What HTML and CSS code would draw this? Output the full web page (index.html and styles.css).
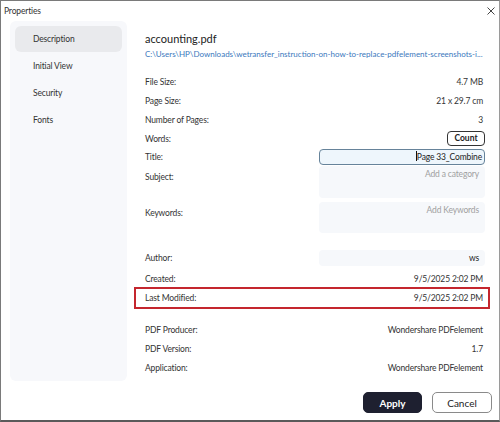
FILE: index.html
```html
<!DOCTYPE html>
<html>
<head>
<meta charset="utf-8">
<link rel="stylesheet" href="styles.css">
</head>
<body>
<div class="window">
  <div class="titlebar">
    <span class="title">Properties</span>
    <svg class="close" width="8" height="8" viewBox="0 0 8 8"><path d="M0.5 0.5L7.5 7.5M7.5 0.5L0.5 7.5" stroke="#444" stroke-width="1"/></svg>
  </div>
  <div class="content">
    <nav class="sidebar">
      <div class="nav-item active">Description</div>
      <div class="nav-item">Initial View</div>
      <div class="nav-item">Security</div>
      <div class="nav-item">Fonts</div>
    </nav>
    <main class="main">
      <div class="filename">accounting.pdf</div>
      <div class="path">C:\Users\HP\Downloads\wetransfer_instruction-on-how-to-replace-pdfelement-screenshots-i...</div>
      <div class="group first">
        <div class="row"><span class="label">File Size:</span><span class="value">4.7 MB</span></div>
        <div class="row"><span class="label">Page Size:</span><span class="value">21 x 29.7 cm</span></div>
        <div class="row"><span class="label">Number of Pages:</span><span class="value">3</span></div>
        <div class="row"><span class="label">Words:</span><button class="count">Count</button></div>
        <div class="row title-row"><span class="label">Title:</span><div class="input focused"><span class="caret"></span>Page 33_Combine</div></div>
        <div class="row area-row subject"><span class="label">Subject:</span><div class="area">Add a category</div></div>
        <div class="row area-row keywords"><span class="label">Keywords:</span><div class="area">Add Keywords</div></div>
        <div class="row author-row"><span class="label">Author:</span><div class="input plain">ws</div></div>
        <div class="row"><span class="label">Created:</span><span class="value">9/5/2025 2:02 PM</span></div>
        <div class="row highlight"><span class="label">Last Modified:</span><span class="value">9/5/2025 2:02 PM</span></div>
      </div>
      <div class="group second">
        <div class="row"><span class="label">PDF Producer:</span><span class="value">Wondershare PDFelement</span></div>
        <div class="row"><span class="label">PDF Version:</span><span class="value">1.7</span></div>
        <div class="row"><span class="label">Application:</span><span class="value">Wondershare PDFelement</span></div>
      </div>
    </main>
  </div>
  <div class="footer">
    <button class="btn apply">Apply</button>
    <button class="btn cancel">Cancel</button>
  </div>
</div>
</body>
</html>
```

FILE: styles.css
```css
* { box-sizing: border-box; }
html, body { margin: 0; padding: 0; background: #fff; }
body {
  font-family: Lato, "Noto Sans", sans-serif;
  font-size: 8.5px;
  letter-spacing: -0.15px;
  color: #333;
}
.window {
  width: 500px;
  height: 422px;
  border: 1px solid #7a7a7a;
  border-bottom: 2px solid #5a5a5a;
  border-right-color: #9a9a9a;
  background: #fff;
  display: flex;
  flex-direction: column;
}
.titlebar {
  height: 19px;
  display: flex;
  align-items: center;
  justify-content: space-between;
  padding: 0 4px 0 3px;
}
.title { font-size: 8.5px; color: #333; }
.close { display: block; margin-top: 1px; }
.content {
  display: flex;
  height: 360px;
  margin-top: 1px;
}
.sidebar {
  flex: 0 0 117px;
  width: 117px;
  margin-left: 9px;
  background: #f7f8fb;
  border-radius: 6px;
  padding: 5px;
  display: flex;
  flex-direction: column;
  gap: 1px;
}
.nav-item {
  height: 26px;
  line-height: 26px;
  padding-left: 18px;
  border-radius: 6px;
  font-size: 8.5px;
  color: #333;
}
.nav-item.active { background: #e9eaed; }
.main {
  flex: 1;
  min-width: 0;
  margin-left: 18px;
  margin-right: 14px;
  padding-top: 10px;
}
.filename {
  font-size: 11px;
  letter-spacing: 0;
  line-height: 16px;
  color: #222;
}
.path {
  font-size: 8px;
  letter-spacing: 0;
  line-height: 12px;
  color: #3a78bd;
  white-space: nowrap;
  overflow: hidden;
  margin-top: 1px;
}
.group.first { margin-top: 12px; }
.group.second { margin-top: 13px; }
.row {
  display: flex;
  justify-content: space-between;
  align-items: center;
  height: 19px;
  position: relative;
}
.label { color: #333; }
.value { color: #333; padding-right: 2px; }
.count {
  font-family: inherit;
  font-size: 8.5px;
  font-weight: 700;
  color: #222;
  background: #fff;
  border: 1px solid #333;
  border-radius: 4px;
  width: 38px;
  height: 15px;
  padding: 0;
  line-height: 13px;
}
.input {
  width: 166px;
  height: 16px;
  border-radius: 4px;
  text-align: right;
  line-height: 14px;
  padding: 0 2px;
  color: #222;
}
.input.focused {
  border: 1px solid #66839a;
  background: #eef6fc;
  white-space: nowrap;
}
.caret {
  display: inline-block;
  width: 1px;
  height: 10px;
  background: #111;
  vertical-align: -1px;
}
.title-row { height: 18px; }
.area-row { align-items: flex-start; }
.area-row .label { margin-top: 6px; }
.area {
  width: 166px;
  background: #f6f8fb;
  border-radius: 4px;
  text-align: right;
  color: #a0a0a0;
  padding: 3px 6px;
  line-height: 11px;
}
.subject { height: 32px; }
.subject .area { height: 32px; }
.keywords { height: 31px; margin-top: 4px; }
.keywords .area { height: 31px; }
.author-row { height: 16px; margin-top: 17px; margin-bottom: 3px; }
.input.plain {
  background: #f6f8fb;
  padding-right: 6px;
  line-height: 16px;
}
.highlight::after {
  content: "";
  position: absolute;
  left: -11px;
  right: -5px;
  top: -1px;
  bottom: -2px;
  border: 2px solid #c4262e;
  pointer-events: none;
}
.footer {
  display: flex;
  justify-content: flex-end;
  gap: 10px;
  padding-right: 7px;
  margin-top: 11px;
}
.btn {
  font-family: inherit;
  height: 21px;
  border-radius: 5px;
  font-size: 10px;
  letter-spacing: 0;
  padding: 0;
}
.apply {
  width: 59px;
  background: #1e2030;
  color: #fff;
  border: 1px solid #1e2030;
  font-weight: 700;
}
.cancel {
  width: 60px;
  background: #fff;
  color: #222;
  border: 1px solid #8a8a8a;
}
```
